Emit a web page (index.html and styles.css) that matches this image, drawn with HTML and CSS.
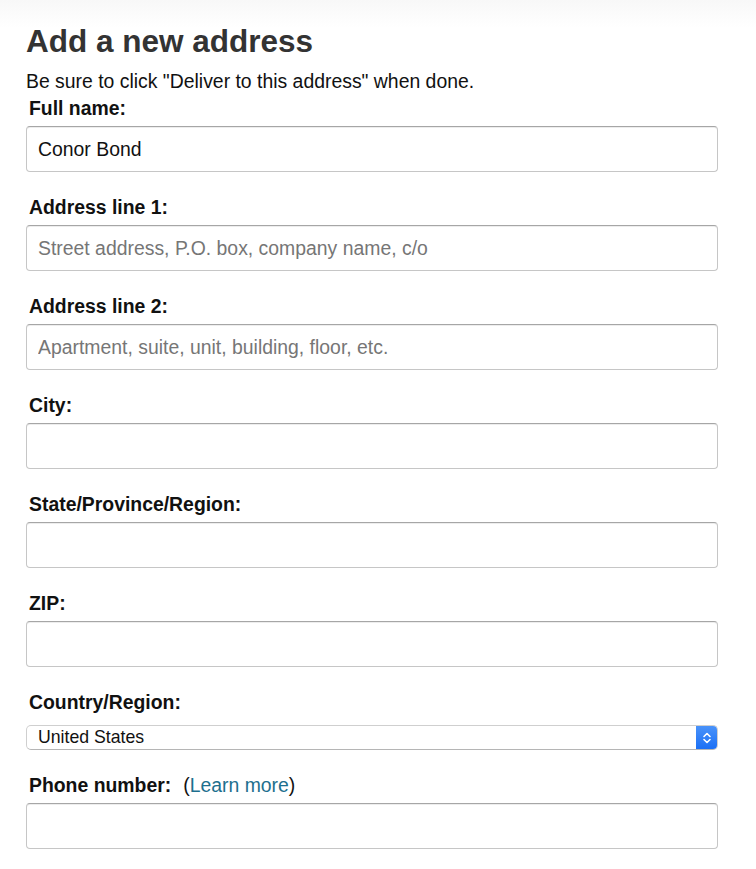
FILE: index.html
```html
<!DOCTYPE html>
<html lang="en">
<head>
<meta charset="utf-8">
<title>Add a new address</title>
<link rel="stylesheet" href="styles.css">
</head>
<body>
<div class="page">
  <h1 class="title">Add a new address</h1>
  <p class="hint">Be sure to click "Deliver to this address" when done.</p>
  <form class="form">
    <div class="field first">
      <label class="label" for="fn">Full name:</label>
      <input class="input" id="fn" type="text" value="Conor Bond">
    </div>
    <div class="field">
      <label class="label" for="a1">Address line 1:</label>
      <input class="input" id="a1" type="text" placeholder="Street address, P.O. box, company name, c/o">
    </div>
    <div class="field">
      <label class="label" for="a2">Address line 2:</label>
      <input class="input" id="a2" type="text" placeholder="Apartment, suite, unit, building, floor, etc.">
    </div>
    <div class="field">
      <label class="label" for="city">City:</label>
      <input class="input" id="city" type="text">
    </div>
    <div class="field">
      <label class="label" for="st">State/Province/Region:</label>
      <input class="input" id="st" type="text">
    </div>
    <div class="field">
      <label class="label" for="zip">ZIP:</label>
      <input class="input" id="zip" type="text">
    </div>
    <div class="field">
      <label class="label" for="cty">Country/Region:</label>
      <div class="select" id="cty">
        <span class="select-value">United States</span>
        <span class="stepper">
          <svg width="10" height="16" viewBox="0 0 10 16"><path d="M2 6.5 L5 3.5 L8 6.5 M2 9.5 L5 12.5 L8 9.5" fill="none" stroke="#fff" stroke-width="1.6" stroke-linecap="round" stroke-linejoin="round"/></svg>
        </span>
      </div>
    </div>
    <div class="field">
      <label class="label" for="ph">Phone number:<span class="paren">(<a class="link" href="#">Learn more</a>)</span></label>
      <input class="input" id="ph" type="text">
    </div>
  </form>
</div>
</body>
</html>
```

FILE: styles.css
```css
html, body {
  margin: 0;
  padding: 0;
  background: #fff;
}
body {
  font-family: "Liberation Sans", Arial, sans-serif;
  color: #111;
}
.page {
  padding: 23px 38px 0 26px;
  background: linear-gradient(to bottom, #f8f8f8 0, #fff 28px);
}
.title {
  margin: 0;
  font-size: 31.5px;
  line-height: 36px;
  font-weight: 700;
  color: #333;
}
.hint {
  margin: 11px 0 0;
  font-size: 19.4px;
  line-height: 22px;
  color: #111;
}
.form {
  margin: 0;
}
.field {
  display: flex;
  flex-direction: column;
  margin-top: 24px;
}
.field.first {
  margin-top: 5px;
}
.label {
  display: block;
  padding-left: 3px;
  font-size: 19.4px;
  line-height: 22px;
  font-weight: 700;
  color: #111;
  margin-bottom: 7px;
}
.paren {
  font-weight: 400;
  margin-left: 12px;
}
.link {
  color: #1d6f8e;
  text-decoration: none;
}
.input {
  box-sizing: border-box;
  width: 692px;
  height: 46px;
  margin: 0;
  padding: 0 11px;
  border: 1px solid #c6c6c6;
  border-top-color: #a6a6a6;
  border-radius: 4px;
  box-shadow: inset 0 1px 0 rgba(0,0,0,.07);
  font-family: "Liberation Sans", Arial, sans-serif;
  font-size: 19.4px;
  color: #111;
  background: #fff;
  outline: none;
}
.input::placeholder {
  color: #767676;
}
.select {
  box-sizing: border-box;
  width: 692px;
  height: 25px;
  margin-top: 5px;
  display: flex;
  align-items: center;
  border: 1px solid #cfcfcf;
  border-bottom-color: #b5b5b5;
  border-radius: 5px;
  background: #fff;
  overflow: hidden;
}
.select-value {
  flex: 1;
  padding-left: 11px;
  font-size: 17.7px;
  color: #111;
}
.stepper {
  width: 22px;
  height: 25px;
  margin-right: -1px;
  display: flex;
  align-items: center;
  justify-content: center;
  background: linear-gradient(to bottom, #4b94fa, #1a6ef5);
}
```
